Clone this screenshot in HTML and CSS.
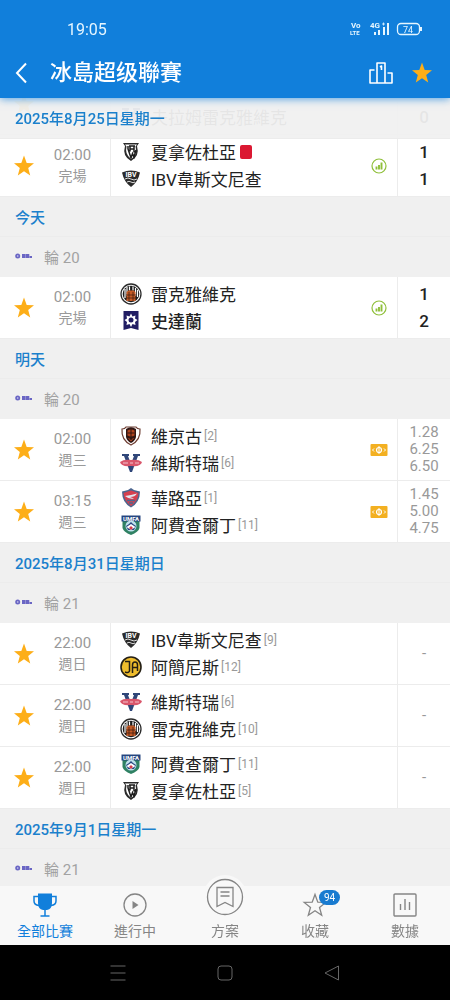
FILE: index.html
```html
<!DOCTYPE html>
<html lang="zh-Hant">
<head>
<meta charset="UTF-8" />
<meta name="viewport" content="width=device-width, initial-scale=1.0" />
<title>冰島超级聯賽</title>
<link rel="stylesheet" href="styles.css">
</head>
<body>

<!-- Icons and club badges -->
<svg class="sprite" aria-hidden="true">
  <symbol id="star" viewBox="0 0 24 24">
    <path d="M12 17.3L18.2 21.5l-2-7.4L22 9.3l-7.3-.4L12 1.500 9.300 8.900 2 9.300l5.800 4.800-2 7.400z" fill="currentColor"/>
  </symbol>
  <symbol id="league" viewBox="0 0 17 6">
    <circle cx="2.700" cy="3" r="2.500" fill="#6a66c4"/>
    <circle cx="2.700" cy="3" r=".8" fill="#d5d4ef"/>
    <path d="M7 2h7.500M7 4h10" stroke="#6a66c4" stroke-width="1.800" stroke-dasharray="3.500 .3"/>
  </symbol>
  <symbol id="stats" viewBox="0 0 16 16">
    <circle cx="8" cy="8" r="7" fill="#fff" stroke="#8fbf3a" stroke-width="1.200"/>
    <path d="M5.500 8.500v3M8 7v4.500M10.500 4.500v7" stroke="#8fbf3a" stroke-width="1.900"/>
  </symbol>
  <symbol id="ticket" viewBox="0 0 18 13">
    <rect x=".5" y=".5" width="17" height="12" rx="1" fill="#f3b021"/>
    <circle cx="9" cy="6.500" r="2.500" fill="none" stroke="#fff" stroke-width="1.200"/>
    <path d="M9 2.500v8M4 5l-1.500 1.500L4 8M14 5l1.500 1.500L14 8" fill="none" stroke="#fff"/>
  </symbol>
  <symbol id="fh" viewBox="0 0 22 22">
    <path d="M3 2h16l-2 3q3 10-6 15Q2 15 5 5z" fill="#2b2b2b"/>
    <path d="M5 3.500h12l-1.500 2q2.500 8-4.500 12.500Q4.500 13 6.500 5.500z" fill="#fff"/>
    <path d="M8 5v3l3 9 1.500-4.500L14 16l2-7M9 5h6M10 5.500v5M14 5.500v6M10 8h4" fill="none" stroke="#1c1c1c" stroke-width="1.500"/>
  </symbol>
  <symbol id="ibv" viewBox="0 0 22 22">
    <path d="M2 4.500Q11 .5 20 4.500 18 14 11 19 4 14 2 4.500z" fill="#2b2b2b"/>
    <text x="11" y="9" font-size="7" font-weight="700" text-anchor="middle" fill="#fff">IBV</text>
    <path d="M5 11q3-2 6 0t6 0M7 14q2-1.500 4 0t4 0" fill="none" stroke="#ddd"/>
  </symbol>
  <symbol id="kr" viewBox="0 0 22 22">
    <circle cx="11" cy="11" r="10" fill="#fff" stroke="#2b2b2b" stroke-width="1.300"/>
    <circle cx="11" cy="11" r="8.300" fill="#1d1d1d"/>
    <path d="M5 6v9M7 4v9M9.500 3.500v4M13 3.500v4M15.500 5v8M17.500 7v7" stroke="#fff" stroke-width="1.200"/>
    <path d="M6.500 9l2-1.500h5l2 1.500v9h-9z" fill="#c45a26"/>
    <path d="M6 12h10M6 15h10M9 9v9M13 9v9" stroke="#3a1b10" stroke-width=".7"/>
  </symbol>
  <symbol id="stjarnan" viewBox="0 0 22 22">
    <path d="M3.500 1h15v19l-7.500-2-7.500 2z" fill="#211d63"/>
    <path d="M11 3.500l1.500 3 3-1-.5 3 2.500 1.500-2.500 2 .5 3-3-1-1.500 3-1.500-3-3 1 .5-3L4.500 10 7 8.500l-.5-3 3 1z" fill="#fff"/>
    <circle cx="11" cy="10" r="2.500" fill="#211d63"/>
  </symbol>
  <symbol id="vikingur" viewBox="0 0 22 22">
    <path d="M2 4q3 0 4-2h10q1 2 4 2 1 11-9 16Q1 15 2 4z" fill="#fff" stroke="#6d3c31" stroke-width="1.200"/>
    <path d="M6 4q5-3.500 10 0v8q-1 4-5 6-4-2-5-6z" fill="#321713"/>
    <path d="M7.500 5.500q3.500-2 7 0v5q-3.500 2-7 0z" fill="#b0441f"/>
    <path d="M11 4v10M7.500 8h7" stroke="#321713"/>
    <path d="M8.500 13l2.500 3 2.500-3" fill="none" stroke="#b0441f"/>
  </symbol>
  <symbol id="vestri" viewBox="0 0 22 22">
    <path d="M2 2h7v2H8l3 8 3-8h-1V2h7v2h-2l-6 16h-2L4 4H2z" fill="#2f4679"/>
    <path d="M0 10q4-3 11-2 7-1 11 2-1 5-11 4Q1 15 0 10z" fill="#d9566b"/>
    <path d="M3 11h5M10 11h3M15 11h4" stroke="#f4c2cb" stroke-width="1.200"/>
    <path d="M9 14l2 5 2-5" fill="#2f4679"/>
  </symbol>
  <symbol id="valur" viewBox="0 0 22 22">
    <path d="M2 4.500l6-1.500 3-2 3 2 6 1.500q0 11-9 16-9-5-9-16z" fill="#4d668f"/>
    <path d="M3.500 6l7.500-2.500L18.500 6q-.5 8-7.500 13-7-5-7.500-13z" fill="#d5404f"/>
    <path d="M5 9q6-1 12-2.500-2 3.500-7 3.500l4 1.500q-5 1-9-2.500z" fill="#dfe7f0"/>
    <path d="M7 13.500h8M9 16h4" stroke="#4d668f" stroke-width="1.500"/>
  </symbol>
  <symbol id="umfa" viewBox="0 0 22 22">
    <path d="M2.500 6h17v8q-1 4-8.500 7-7.500-3-8.500-7z" fill="#2f8163"/>
    <path d="M1.500 1.500h19v6h-19z" fill="#24457f"/>
    <text x="11" y="6.800" font-size="6" font-weight="700" text-anchor="middle" fill="#fff">UMFA</text>
    <circle cx="11" cy="12" r="5.500" fill="#bfe0ec"/>
    <path d="M6 12l3-2 2-2 2 2 3 2-2 4H8z" fill="#24457f"/>
    <path d="M6.500 13l4.500-3 4.500 3-4.500 3z" fill="#fff"/>
    <path d="M9 14l2-2 2 2-2 2z" fill="#d23c4c"/>
  </symbol>
  <symbol id="ia" viewBox="0 0 22 22">
    <circle cx="11" cy="11" r="10" fill="#efbd2d" stroke="#241f14" stroke-width="1.600"/>
    <path d="M5 5.500h4.500V15q-1 2.500-4.500 1M12.500 17V9q0-3 2.500-3t2.500 3v6M12.500 11.500h5" fill="none" stroke="#241f14" stroke-width="1.500"/>
  </symbol>
</svg>

<div class="app">
  <header class="top-bar">
    <div class="status-bar">
      <span class="clock">19:05</span>
      <svg class="status-icons" viewBox="0 0 74 16" role="img" aria-label="VoLTE 4G 74%">
        <g fill="#e6f6ff" font-weight="700">
          <text x="1" y="7" font-size="8">Vo</text>
          <text x="0" y="14" font-size="6">LTE</text>
          <text x="20" y="7" font-size="8">4G</text>
          <path d="M24 11h2v3h-2zM28 9h2v5h-2zM33 6h2v8h-2zM37 2h2v12h-2z"/>
          <path d="M70 6h2v4h-2z"/>
          <text x="58" y="11.500" font-size="9" font-weight="400" text-anchor="middle">74</text>
        </g>
        <path d="M32 3h3M33.500 1.500v3" stroke="#e6f6ff" stroke-width=".8"/>
        <rect x="47.500" y="2.500" width="22" height="11" rx="3.500" fill="none" stroke="#e6f6ff" stroke-width="1.300"/>
      </svg>
    </div>
    <div class="toolbar">
      <button class="icon-button back" aria-label="返回">
        <svg width="14" height="22" viewBox="0 0 14 22"><path d="M12 1.500L3 11l9 9.500" fill="none" stroke="#fff" stroke-width="2"/></svg>
      </button>
      <h1>冰島超级聯賽</h1>
      <button class="icon-button" aria-label="積分榜">
        <svg width="24" height="22" viewBox="0 0 24 22"><path d="M5.500 8H1v13h22V11h-4.500M8 21V1h8v20M11 5l1.500-1v4" fill="none" stroke="#fff" stroke-width="1.600" stroke-linejoin="round"/></svg>
      </button>
      <button class="icon-button favourite" aria-label="收藏聯賽">
        <svg width="24" height="24"><use href="#star"/></svg>
      </button>
    </div>
  </header>

  <main>
    <section>
      <h2 class="date stuck">2025年8月25日星期一</h2>

      <article class="match">
        <button class="fav" aria-label="收藏"><svg width="24" height="24"><use href="#star"/></svg></button>
        <div class="time"></div>
        <div class="teams">
          <div class="team"></div>
          <div class="team"><svg><use href="#vestri"/></svg>夫拉姆雷克雅維克</div>
        </div>
        <div class="score"><span></span><span>0</span></div>
      </article>

      <article class="match">
        <button class="fav" aria-label="收藏"><svg width="24" height="24"><use href="#star"/></svg></button>
        <div class="time"><span>02:00</span><span class="state">完場</span></div>
        <div class="teams">
          <div class="team"><svg><use href="#fh"/></svg>夏拿佐杜亞<i class="red-card"></i></div>
          <div class="team"><svg><use href="#ibv"/></svg>IBV韋斯文尼查</div>
        </div>
        <svg class="extra"><use href="#stats"/></svg>
        <div class="score"><span>1</span><span>1</span></div>
      </article>
    </section>

    <section>
      <h2 class="date">今天</h2>
      <div class="round"><svg><use href="#league"/></svg>輪 20</div>

      <article class="match">
        <button class="fav" aria-label="收藏"><svg width="24" height="24"><use href="#star"/></svg></button>
        <div class="time"><span>02:00</span><span class="state">完場</span></div>
        <div class="teams">
          <div class="team"><svg><use href="#kr"/></svg>雷克雅維克</div>
          <div class="team winner"><svg><use href="#stjarnan"/></svg>史達蘭</div>
        </div>
        <svg class="extra"><use href="#stats"/></svg>
        <div class="score"><span>1</span><span>2</span></div>
      </article>
    </section>

    <section>
      <h2 class="date">明天</h2>
      <div class="round"><svg><use href="#league"/></svg>輪 20</div>

      <article class="match">
        <button class="fav" aria-label="收藏"><svg width="24" height="24"><use href="#star"/></svg></button>
        <div class="time"><span>02:00</span><span class="state">週三</span></div>
        <div class="teams">
          <div class="team"><svg><use href="#vikingur"/></svg>維京古<small>[2]</small></div>
          <div class="team"><svg><use href="#vestri"/></svg>維斯特瑞<small>[6]</small></div>
        </div>
        <svg class="extra"><use href="#ticket"/></svg>
        <div class="odds"><span>1.28</span><span>6.25</span><span>6.50</span></div>
      </article>

      <article class="match">
        <button class="fav" aria-label="收藏"><svg width="24" height="24"><use href="#star"/></svg></button>
        <div class="time"><span>03:15</span><span class="state">週三</span></div>
        <div class="teams">
          <div class="team"><svg><use href="#valur"/></svg>華路亞<small>[1]</small></div>
          <div class="team"><svg><use href="#umfa"/></svg>阿費查爾丁<small>[11]</small></div>
        </div>
        <svg class="extra"><use href="#ticket"/></svg>
        <div class="odds"><span>1.45</span><span>5.00</span><span>4.75</span></div>
      </article>
    </section>

    <section>
      <h2 class="date">2025年8月31日星期日</h2>
      <div class="round"><svg><use href="#league"/></svg>輪 21</div>

      <article class="match">
        <button class="fav" aria-label="收藏"><svg width="24" height="24"><use href="#star"/></svg></button>
        <div class="time"><span>22:00</span><span class="state">週日</span></div>
        <div class="teams">
          <div class="team"><svg><use href="#ibv"/></svg>IBV韋斯文尼查<small>[9]</small></div>
          <div class="team"><svg><use href="#ia"/></svg>阿簡尼斯<small>[12]</small></div>
        </div>
        <div class="odds"><span>-</span></div>
      </article>

      <article class="match">
        <button class="fav" aria-label="收藏"><svg width="24" height="24"><use href="#star"/></svg></button>
        <div class="time"><span>22:00</span><span class="state">週日</span></div>
        <div class="teams">
          <div class="team"><svg><use href="#vestri"/></svg>維斯特瑞<small>[6]</small></div>
          <div class="team"><svg><use href="#kr"/></svg>雷克雅維克<small>[10]</small></div>
        </div>
        <div class="odds"><span>-</span></div>
      </article>

      <article class="match">
        <button class="fav" aria-label="收藏"><svg width="24" height="24"><use href="#star"/></svg></button>
        <div class="time"><span>22:00</span><span class="state">週日</span></div>
        <div class="teams">
          <div class="team"><svg><use href="#umfa"/></svg>阿費查爾丁<small>[11]</small></div>
          <div class="team"><svg><use href="#fh"/></svg>夏拿佐杜亞<small>[5]</small></div>
        </div>
        <div class="odds"><span>-</span></div>
      </article>
    </section>

    <section>
      <h2 class="date">2025年9月1日星期一</h2>
      <div class="round"><svg><use href="#league"/></svg>輪 21</div>
    </section>
  </main>

  <nav class="tabs">
    <a href="#all" class="active">
      <svg width="26" height="26" viewBox="0 0 26 26">
        <path d="M6 1.500h14V11q0 6-5 7h-4q-5-1-5-7z" fill="currentColor"/>
        <path d="M6 4.500H2V9q0 4 5 4.500M20 4.500h4V9q0 4-5 4.500M13 18v6M8.500 24h9" fill="none" stroke="currentColor" stroke-width="1.500"/>
      </svg>
      全部比賽
    </a>
    <a href="#live">
      <svg width="26" height="26" viewBox="0 0 26 26">
        <circle cx="13" cy="13" r="11" fill="none" stroke="currentColor" stroke-width="1.300"/>
        <path d="M10.500 9l6 4-6 4z" fill="currentColor"/>
      </svg>
      進行中
    </a>
    <a href="#plans" class="center-tab">
      <svg width="44" height="44" viewBox="0 0 44 44">
        <circle cx="22" cy="22" r="22" fill="#f8f8f8"/>
        <circle cx="22" cy="22" r="17.500" fill="none" stroke="currentColor" stroke-width="1.300"/>
        <path d="M14 12.500h16v19l-8-4-8 4zM17.500 17h9M17.500 21h9" fill="none" stroke="currentColor" stroke-width="1.300"/>
      </svg>
      方案
    </a>
    <a href="#favourites">
      <svg width="26" height="26" viewBox="0 0 26 26"><path d="M13 2.500l2.800 7.600 8 .3-6.300 5 2.200 7.800-6.700-4.500-6.700 4.500 2.200-7.800-6.300-5 8-.3z" fill="none" stroke="currentColor" stroke-width="1.300"/></svg>
      收藏
      <span class="badge">94</span>
    </a>
    <a href="#data">
      <svg width="26" height="26" viewBox="0 0 26 26">
        <rect x="2" y="2" width="22" height="22" rx="1" fill="none" stroke="currentColor" stroke-width="1.400"/>
        <path d="M8.500 12v6M13 7v11M17.500 10v8" stroke="currentColor" stroke-width="1.400"/>
      </svg>
      數據
    </a>
  </nav>

  <div class="system-bar">
    <button aria-label="最近"><svg width="18" height="18" viewBox="0 0 18 18"><path d="M1.500 2h15M1.500 9h15M1.500 16h15"/></svg></button>
    <button aria-label="主頁"><svg width="18" height="18" viewBox="0 0 18 18"><rect x="2" y="2" width="14" height="14" rx="3"/></svg></button>
    <button aria-label="返回"><svg width="18" height="18" viewBox="0 0 18 18"><path d="M15.500 2v14L2 9z" stroke-linejoin="round"/></svg></button>
  </div>
</div>

</body>
</html>
```
FILE: styles.css
```css
:root {
  --blue: #117fdb;
  --link-blue: #1b80cc;
  --star: #fdae18;
  --grey-bg: #f0f0f0;
  --grey-text: #999;
  --line: #ececec;
}

* {
  box-sizing: border-box;
}

body {
  margin: 0;
  font-family: Roboto, "Noto Sans CJK TC", sans-serif;
  color: #222;
  background-color: #fff;
}

button {
  background: none;
  border: none;
  padding: 0;
  cursor: pointer;
}

svg {
  display: block;
  flex-shrink: 0;
}

.sprite {
  display: none;
}

.app {
  display: flex;
  flex-direction: column;
  height: 100vh;
}

/* Header */
.top-bar {
  position: relative;
  z-index: 3;
  background-color: var(--blue);
  color: #fff;
  box-shadow: 0 1px 8px rgba(17, 127, 219, 0.7);
}

.status-bar {
  display: flex;
  justify-content: space-between;
  align-items: center;
  height: 48px;
  padding: 10px 26px 0 67px;
}

.clock {
  font-size: 16px;
  color: #e6f6ff;
}

.status-icons {
  width: 74px;
  height: 16px;
}

.toolbar {
  display: flex;
  align-items: center;
  height: 50px;
  padding: 0 16px 0 14px;
}

.toolbar h1 {
  flex: 1;
  margin: 0 0 0 22px;
  font-size: 22px;
  line-height: 30px;
  font-weight: 500;
}

.favourite {
  margin-left: 17px;
  color: var(--star);
}

/* Match list */
main {
  flex: 1;
  min-height: 0;
  overflow-y: auto;
  scrollbar-width: none;
  background-color: var(--grey-bg);
}

.date {
  margin: 0;
  padding: 2px 15px 0;
  height: 40px;
  line-height: 39px;
  font-size: 15px;
  font-weight: 500;
  color: var(--link-blue);
  border-bottom: 1px solid var(--line);
}

/* the rows scroll underneath this one */
.stuck {
  position: sticky;
  top: 0;
  z-index: 2;
  height: 41px;
  margin-bottom: -66px;
  background-color: rgba(240, 240, 240, 0.95);
}

.round {
  display: flex;
  align-items: center;
  gap: 12px;
  height: 40px;
  padding: 0 15px 2px;
  font-size: 15px;
  color: #a2a2a2;
}

.round svg {
  width: 17px;
  height: 6px;
}

.match {
  display: flex;
  min-height: 62px;
  background-color: #fff;
  border-bottom: 1px solid var(--line);
}

.fav {
  display: grid;
  place-items: center;
  width: 48px;
  color: var(--star);
}

.time {
  display: flex;
  flex-direction: column;
  justify-content: center;
  width: 63px;
  padding-right: 13px;
  border-right: 1px solid var(--line);
  font-size: 15px;
  line-height: 21px;
  text-align: center;
  color: var(--grey-text);
}

.state {
  font-size: 14px;
}

.teams {
  flex: 1;
  padding: 3px 0 4px 9px;
}

.team {
  display: flex;
  align-items: center;
  height: 27px;
  font-size: 17px;
  white-space: nowrap;
}

.team svg {
  width: 22px;
  height: 22px;
  margin-right: 9px;
}

.team small {
  margin-left: 2px;
  font-size: 12px;
  color: var(--grey-text);
}

.winner {
  font-weight: 500;
}

.red-card {
  width: 12px;
  height: 14px;
  margin-left: 4px;
  border-radius: 2px;
  background-color: #db1832;
}

.extra {
  width: 18px;
  height: 16px;
  margin-right: 9px;
  align-self: center;
}

.score,
.odds {
  display: flex;
  flex-direction: column;
  justify-content: center;
  width: 53px;
  border-left: 1px solid var(--line);
  text-align: center;
}

.score {
  font-size: 17px;
  font-weight: 500;
}

.score span {
  height: 27px;
  line-height: 27px;
}

.odds {
  font-size: 15px;
  line-height: 17px;
  color: var(--grey-text);
}

/* Bottom tabs */
.tabs {
  position: relative;
  z-index: 2;
  display: flex;
  background-color: #f8f8f8;
}

.tabs a {
  position: relative;
  flex: 1;
  display: flex;
  flex-direction: column;
  align-items: center;
  padding: 6px 0 4px;
  gap: 3px;
  font-size: 14px;
  line-height: 20px;
  color: #858585;
  text-decoration: none;
}

.tabs .active {
  color: var(--blue);
}

.center-tab svg {
  margin-top: -17px;
  margin-bottom: -1px;
}

.badge {
  position: absolute;
  top: 4px;
  left: 50%;
  margin-left: 4px;
  padding: 0 5px;
  border-radius: 8px;
  background-color: #197bd0;
  color: #fff;
  font-size: 10px;
  line-height: 15px;
}

/* Android buttons */
.system-bar {
  display: flex;
  height: 55px;
  padding: 0 64px;
  background-color: #000;
}

.system-bar button {
  flex: 1;
  display: grid;
  place-items: center;
}

.system-bar svg {
  fill: none;
  stroke: #666;
  stroke-width: 1;
}
```
